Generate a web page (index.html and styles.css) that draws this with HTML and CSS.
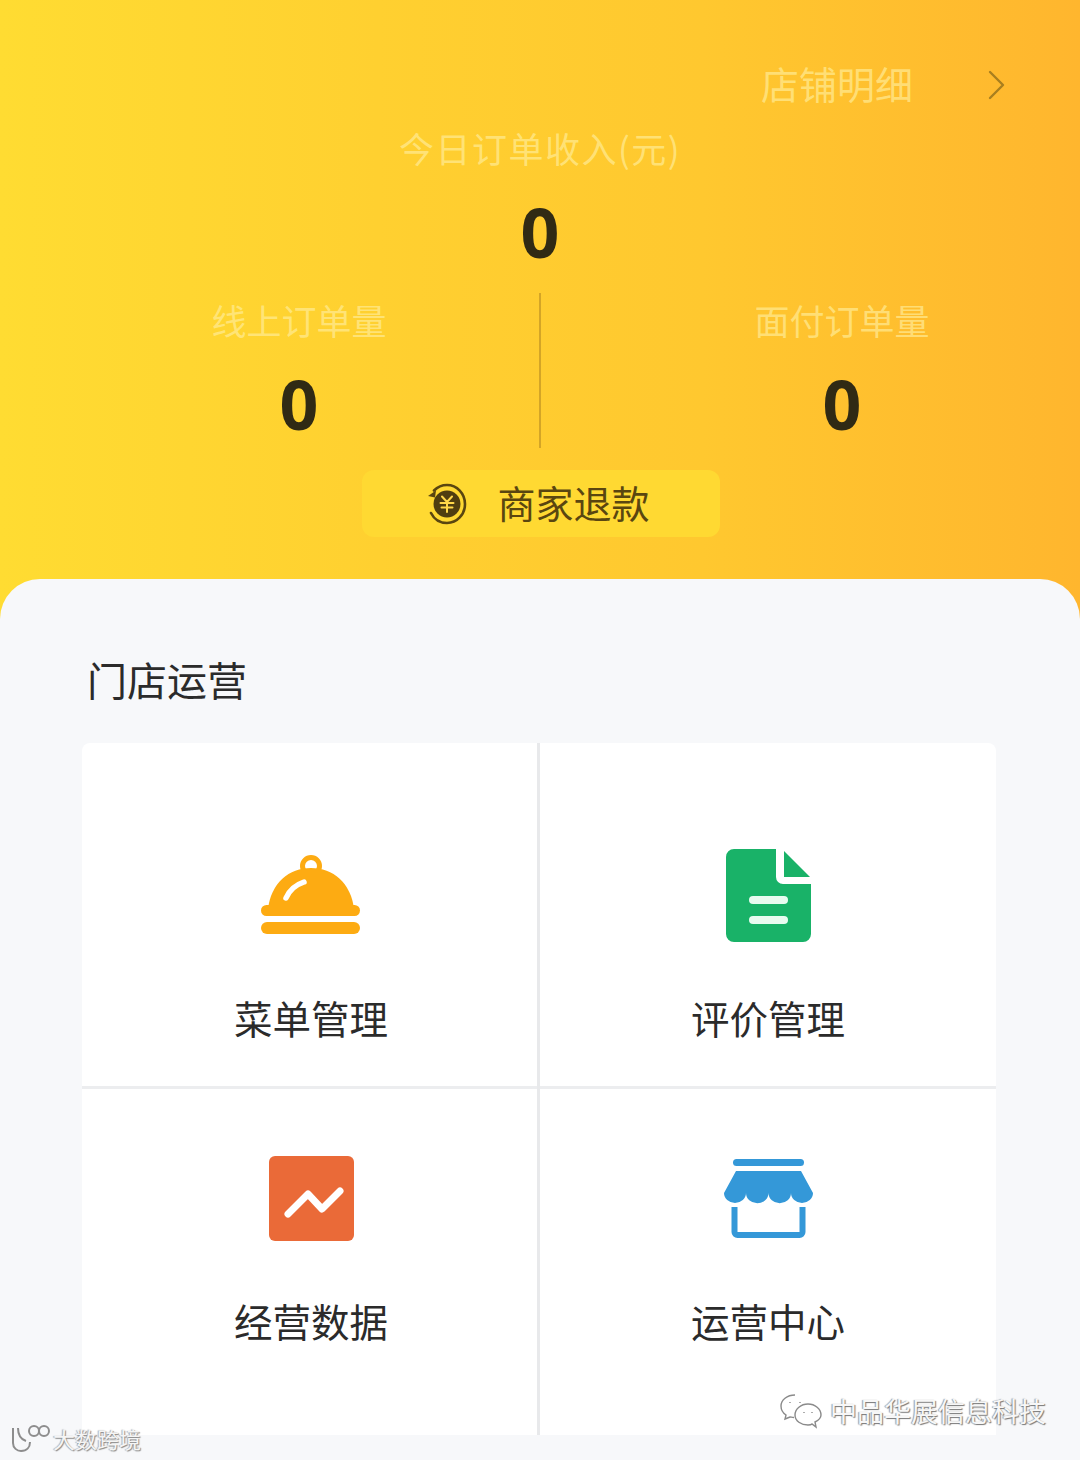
FILE: index.html
```html
<!DOCTYPE html>
<html>
<head>
  <meta charset="UTF-8">
  <title>门店运营</title>
  <link rel="stylesheet" href="styles.css">
</head>
<body>
  <div class="page">
    <!-- Yellow summary header -->
    <div class="header">
      <div class="shop-link">
        <span class="shop-link-text">店铺明细</span>
        <svg class="chevron" width="18" height="30" viewBox="0 0 18 30" fill="none" stroke="#a97f1f" stroke-width="2.4" stroke-linecap="round" stroke-linejoin="round">
          <polyline points="2 2 15 15 2 28"></polyline>
        </svg>
      </div>
      <div class="income-label">今日订单收入(元)</div>
      <div class="big-value">0</div>
      <div class="stats">
        <div class="stat">
          <div class="stat-label">线上订单量</div>
          <div class="big-value">0</div>
        </div>
        <div class="stat-divider"></div>
        <div class="stat">
          <div class="stat-label">面付订单量</div>
          <div class="big-value">0</div>
        </div>
      </div>
      <div class="refund-button">
        <svg width="40" height="42" viewBox="0 0 40 42" fill="none">
          <path d="M7 7.5C11 3.5 15 2 20 2c10 0 18 8.500 18 19s-8 19-18 19c-7 0-13-4-16-10" stroke="#5a4610" stroke-width="2.600" stroke-linecap="round"></path>
          <path d="M1 13l7 1.500 1-7" fill="#5a4610"></path>
          <circle cx="20" cy="21" r="13.500" fill="#4f3e10"></circle>
          <path d="M15 13.500l5 5.500 5-5.500M13.500 20h13M14.500 24.500h11M20 19v10" stroke="#ffd84a" stroke-width="2" stroke-linecap="round"></path>
        </svg>
        <span class="refund-text">商家退款</span>
      </div>
    </div>

    <!-- Store operations card -->
    <div class="card">
      <div class="card-title">门店运营</div>
      <div class="menu-grid">
        <div class="menu-item item-top item-left">
          <div class="menu-icon">
            <svg width="100" height="80" viewBox="0 0 100 80">
              <circle cx="50" cy="11" r="8.500" fill="none" stroke="#fdab12" stroke-width="5"></circle>
              <path d="M7 54C10 28 28 13 50 13S90 28 93 54Z" fill="#fdab12"></path>
              <rect x="0" y="50" width="99" height="11" rx="5.500" fill="#fdab12"></rect>
              <rect x="0" y="67" width="99" height="12" rx="6" fill="#fdab12"></rect>
              <path d="M25 43C28 36 34 30 43 27" fill="none" stroke="#fff" stroke-width="5.500" stroke-linecap="round"></path>
            </svg>
          </div>
          <div class="menu-label">菜单管理</div>
        </div>
        <div class="menu-item item-top">
          <div class="menu-icon">
            <svg width="85" height="93" viewBox="0 0 85 93">
              <path d="M8 0H50V28a7 7 0 0 0 7 7H85V85a8 8 0 0 1-8 8H8a8 8 0 0 1-8-8V8a8 8 0 0 1 8-8Z" fill="#19b268"></path>
              <path d="M58 2L84 28H58Z" fill="#19b268"></path>
              <rect x="23" y="47" width="39" height="8" rx="4" fill="#e8fbf0"></rect>
              <rect x="23" y="67" width="39" height="8" rx="4" fill="#e8fbf0"></rect>
            </svg>
          </div>
          <div class="menu-label">评价管理</div>
        </div>
        <div class="menu-item item-bottom item-left">
          <div class="menu-icon">
            <svg width="85" height="85" viewBox="0 0 85 85">
              <rect width="85" height="85" rx="6" fill="#ea6a38"></rect>
              <polyline points="19 58 39 38 53 53 71 35" fill="none" stroke="#fff" stroke-width="7" stroke-linecap="round" stroke-linejoin="round"></polyline>
            </svg>
          </div>
          <div class="menu-label">经营数据</div>
        </div>
        <div class="menu-item item-bottom">
          <div class="menu-icon">
            <svg width="89" height="79" viewBox="0 0 89 79">
              <rect x="9" y="0" width="71" height="7" rx="3.500" fill="#3498d8"></rect>
              <path d="M12 12H77L89 34a11 10 0 0 1-22 0 11 10 0 0 1-22.500 0 11 10 0 0 1-22.500 0 11 10 0 0 1-22 0Z" fill="#3498d8"></path>
              <path d="M10.500 48V73a3 3 0 0 0 3 3H75.500a3 3 0 0 0 3-3V48" fill="none" stroke="#3498d8" stroke-width="6"></path>
            </svg>
          </div>
          <div class="menu-label">运营中心</div>
        </div>
      </div>
    </div>

    <!-- Watermarks over the screenshot -->
    <div class="mark mark-left">
      <svg width="40" height="30" viewBox="0 0 40 30" fill="none" stroke="#8d8d8d" stroke-width="2">
        <path d="M3 5V20c0 5 4 8 8 8 6 0 9-4 9-9M8 5c0 7 2 11 8 13"></path>
        <circle cx="24" cy="8" r="5"></circle>
        <circle cx="34" cy="8" r="5"></circle>
      </svg>
      <span class="mark-left-text">大数跨境</span>
    </div>
    <div class="mark mark-right">
      <svg width="44" height="36" viewBox="0 0 44 36" fill="none" stroke="#8a8a8a" stroke-width="1.400">
        <path d="M16 2C8 2 2 7 2 13c0 4 2 7 5 9l-1 4 5-2c1 0 2 .5 4 .5"></path>
        <path d="M29 11c-7 0-13 5-13 11s6 10 13 10c2 0 3 0 4-1l4 3-1-5c4-2 6-4 6-7 0-6-6-11-13-11Z"></path>
        <path d="M11 9v1M21 9v1M25 19v1M33 19v1"></path>
      </svg>
      <span class="mark-right-text">中品华展信息科技</span>
    </div>
  </div>
</body>
</html>
```

FILE: styles.css
```css
* {
  box-sizing: border-box;
}
body {
  margin: 0;
  font-family: "Noto Sans CJK SC", "Noto Sans", sans-serif;
  color: #2b2b2b;
}
.page {
  position: relative;
  width: 1080px;
  height: 1460px;
  overflow: hidden;
  display: flex;
  flex-direction: column;
  background: linear-gradient(90deg, #ffdc32 0%, #ffd030 35%, #ffc82f 65%, #ffb62e 100%);
}

/* Header */
.header {
  height: 579px;
  padding-top: 58px;
  flex-shrink: 0;
}
.shop-link {
  display: flex;
  justify-content: flex-end;
  align-items: center;
  height: 50px;
  padding-right: 74px;
}
.shop-link-text {
  font-size: 38px;
  line-height: 50px;
  color: rgba(255, 236, 150, 0.7);
  margin-right: 75px;
}
.chevron {
  margin-top: 4px;
}
.income-label {
  margin-top: 15px;
  font-size: 35px;
  line-height: 50px;
  letter-spacing: 1.500px;
  text-align: center;
  color: rgba(255, 236, 150, 0.7);
}
.big-value {
  margin-top: 19px;
  font-family: "Noto Sans", sans-serif;
  font-size: 68px;
  font-weight: 700;
  line-height: 80px;
  text-align: center;
  color: #302a14;
}
.stats {
  display: flex;
  height: 155px;
  margin-top: 21px;
  padding-left: 179px;
}
.stat {
  width: 240px;
  padding-top: 2px;
}
.stat-label {
  font-size: 35px;
  line-height: 50px;
  text-align: center;
  color: rgba(255, 236, 150, 0.7);
}
.stat-divider {
  width: 2px;
  margin: 0 181px 0 120px;
  background-color: rgba(170, 125, 30, 0.5);
}
.refund-button {
  display: flex;
  align-items: center;
  justify-content: center;
  gap: 30px;
  width: 358px;
  height: 67px;
  margin: 22px 0 0 362px;
  padding-right: 5px;
  border-radius: 12px;
  background-color: #ffd932;
}
.refund-text {
  font-size: 38px;
  line-height: 50px;
  margin-bottom: 4px;
  color: #5a4610;
}

/* Card */
.card {
  flex: 1;
  padding-top: 75px;
  border-radius: 40px 40px 0 0;
  background-color: #f7f8fa;
}
.card-title {
  padding-left: 87px;
  font-size: 40px;
  line-height: 50px;
}
.menu-grid {
  display: grid;
  grid-template-columns: 458px 456px;
  grid-template-rows: 346px 346px;
  margin: 39px 0 0 82px;
  width: 914px;
  border-radius: 8px 8px 0 0;
  background-color: #fff;
}
.menu-item {
  display: flex;
  flex-direction: column;
  align-items: center;
}
.item-top {
  padding-top: 102px;
  box-shadow: inset 0 -3px 0 #ecedef;
}
.item-bottom {
  padding-top: 59px;
}
.item-left {
  box-shadow: inset -3px 0 0 #e8e9eb;
}
.item-top.item-left {
  box-shadow: inset -3px 0 0 #e8e9eb, inset 0 -3px 0 #ecedef;
}
.menu-icon {
  display: flex;
  align-items: center;
  justify-content: center;
  height: 100px;
}
.menu-label {
  margin-top: 47px;
  font-size: 38.500px;
  line-height: 50px;
}
.item-bottom .menu-label {
  margin-top: 47px;
}

/* Watermarks */
.mark {
  position: absolute;
  display: flex;
  align-items: center;
}
.mark-left {
  left: 10px;
  top: 1423px;
  gap: 3px;
}
.mark-left-text {
  font-size: 22px;
  line-height: 30px;
  color: #f5f5f5;
  text-shadow: 1px 1px 1px #888, -1px 0 1px #aaa;
}
.mark-right {
  left: 779px;
  top: 1393px;
  gap: 7px;
}
.mark-right-text {
  font-size: 27px;
  line-height: 36px;
  color: #f7f7f7;
  text-shadow: 1px 1px 1px #777, -1px 0 1px #999;
}
```
